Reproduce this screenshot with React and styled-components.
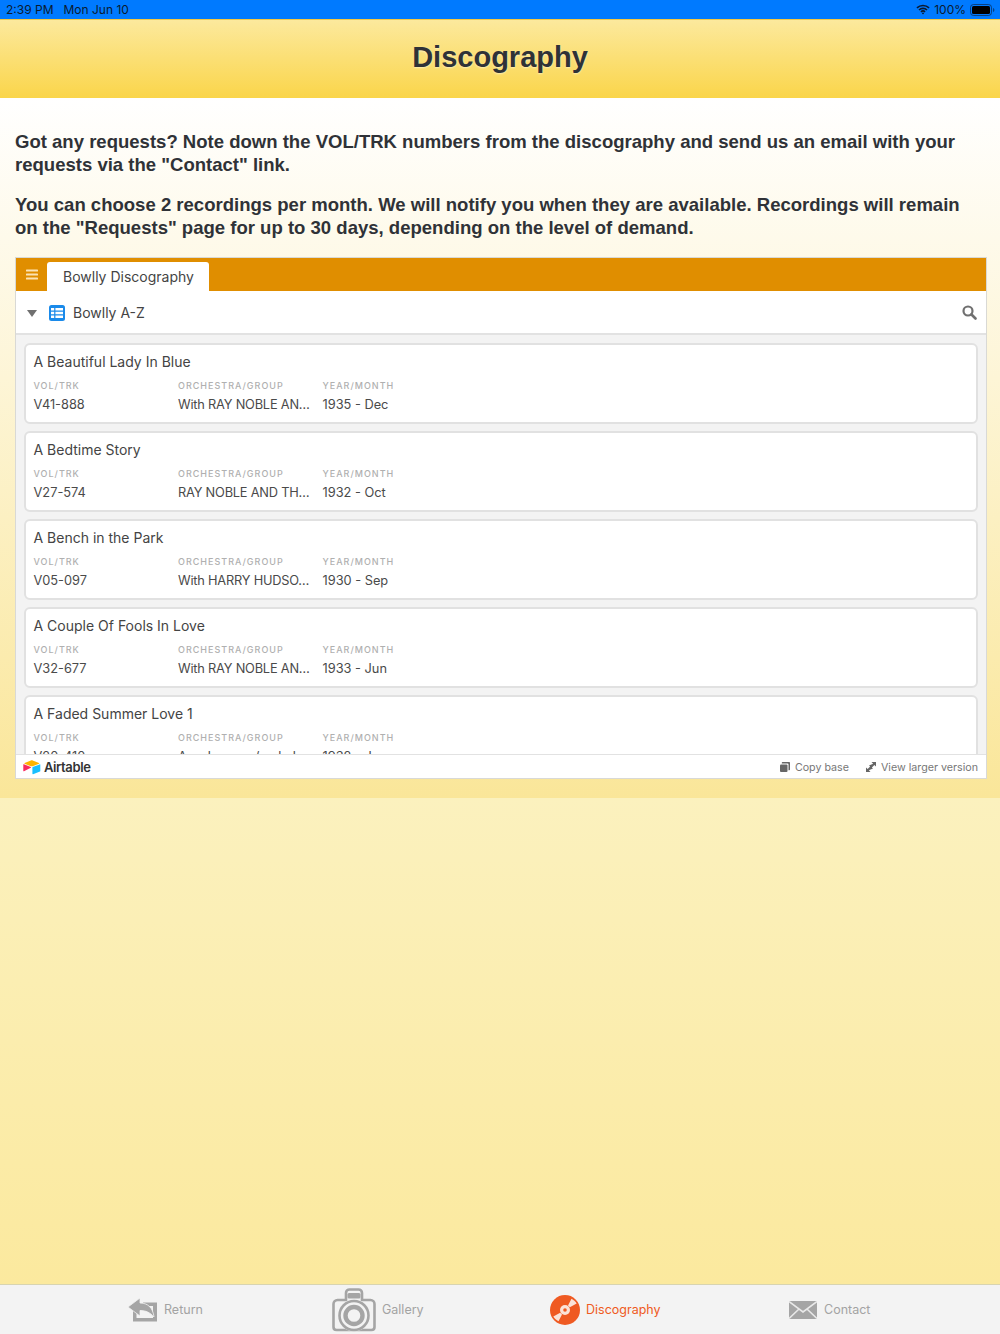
import React from "react";
import styled, { createGlobalStyle } from "styled-components";

const Global = createGlobalStyle`
  html, body { margin: 0; padding: 0; }
  body { background: #fbe99e; font-family: "Liberation Sans", Arial, sans-serif; }
  * { box-sizing: border-box; }
`;

const Page = styled.div`
  width: 1000px;
  height: 1334px;
  display: flex;
  flex-direction: column;
  overflow: hidden;
`;

const StatusBar = styled.div`
  height: 20px;
  flex: none;
  background: #007aff;
  border-bottom: 1px solid #f5c842;
  color: #0b1a30;
  font-size: 12px;
  display: flex;
  align-items: center;
  justify-content: space-between;
  padding: 0 5px 0 6px;
  font-family: Inter, "Liberation Sans", sans-serif;
`;
const StatusGroup = styled.div`
  display: flex;
  align-items: center;
  gap: ${(p) => p.$gap || 10}px;
  height: 19px;
`;
const Header = styled.header`
  height: 78px;
  flex: none;
  background: linear-gradient(#fce99d, #fad54a);
  display: flex;
  align-items: center;
  justify-content: center;
`;
const Title = styled.h1`
  margin: 0 0 4px;
  font-size: 29px;
  font-weight: 700;
  color: #2f3237;
  text-shadow: 0 1px 2px rgba(255, 255, 255, 0.5);
`;
const Main = styled.main`
  height: 700px;
  flex: none;
  background: linear-gradient(#ffffff, #fae699);
  padding: 33px 13px 0 15px;
`;
const Para = styled.p`
  margin: 0 0 17.6px;
  font-size: 18.55px;
  line-height: 22.8px;
  font-weight: 700;
  color: #2f3237;
`;
const Embed = styled.section`
  width: 972px;
  height: 522px;
  border: 1px solid #d9d9d5;
  display: flex;
  flex-direction: column;
  background: #fff;
  font-family: Inter, "Liberation Sans", sans-serif;
`;
const TabBand = styled.div`
  height: 33px;
  flex: none;
  background: #e08e00;
  display: flex;
  align-items: flex-end;
`;
const Burger = styled.div`
  width: 31px;
  height: 33px;
  display: flex;
  align-items: center;
  justify-content: center;
`;
const Tab = styled.div`
  width: 162px;
  height: 29px;
  background: #fff;
  border-radius: 3px 3px 0 0;
  color: #444;
  font-size: 14px;
  display: flex;
  align-items: center;
  padding: 0 0 0 16px;
`;
const ViewBar = styled.div`
  height: 44px;
  flex: none;
  background: #fff;
  border-bottom: 2px solid #e2e2e2;
  display: flex;
  align-items: center;
  padding: 1px 9px 0 11px;
  color: #444;
  font-size: 14px;
`;
const ViewName = styled.span`
  margin-left: 8px;
  flex: 1;
`;
const Caret = styled.div`
  width: 0;
  height: 0;
  border-left: 5px solid transparent;
  border-right: 5px solid transparent;
  border-top: 7px solid #707070;
  margin: 2px 12px 0 0;
`;
const List = styled.div`
  flex: 1;
  min-height: 0;
  overflow: hidden;
  background: #f3f3f3;
  padding: 8px 8px 0;
  display: flex;
  flex-direction: column;
  gap: 7px;
`;
const Card = styled.article`
  flex: none;
  height: 81px;
  background: #fff;
  border: 2px solid #e1e1e1;
  border-radius: 6px;
  padding: 8px 8px 0 7.5px;
  color: #444;
`;
const CardTitle = styled.div`
  font-size: 14px;
  line-height: 18px;
`;
const Fields = styled.div`
  display: grid;
  grid-template-columns: 144.5px 144.5px 1fr;
  margin-top: 9px;
`;
const FieldLabel = styled.div`
  font-size: 9px;
  line-height: 12px;
  letter-spacing: 1px;
  color: #b0b0b0;
  font-weight: 500;
`;
const FieldValue = styled.div`
  font-size: 12.8px;
  line-height: 16px;
  margin-top: 5px;
  color: #4a4a4a;
  white-space: nowrap;
  letter-spacing: ${(p) => (p.$tight ? "-0.2px" : "0")};
`;
const EmbedFoot = styled.div`
  height: 24px;
  flex: none;
  background: #fff;
  border-top: 1px solid #e2e2e2;
  display: flex;
  align-items: center;
  padding: 1px 8px 0 7px;
  font-size: 10.7px;
  color: #777;
`;
const Brand = styled.div`
  display: flex;
  align-items: center;
  flex: 1;
  gap: 3px;
  font-size: 13px;
  font-weight: 600;
  color: #333;
  letter-spacing: -0.4px;
`;
const FootLink = styled.span`
  display: flex;
  align-items: center;
  gap: 5px;
  margin-left: 17px;
`;
const Rest = styled.div`
  flex: 1;
  min-height: 0;
  background: linear-gradient(#fbf1be, #fbe99e);
`;
const TabBar = styled.nav`
  height: 50px;
  flex: none;
  background: #f3f3f3;
  border-top: 1px solid #d8d4b0;
  display: flex;
  align-items: center;
  font-family: Inter, "Liberation Sans", sans-serif;
  font-size: 12.5px;
  color: #a3a3a3;
  padding-left: 128px;
`;
const TabItem = styled.div`
  display: flex;
  align-items: center;
  gap: ${(p) => p.$gap}px;
  width: ${(p) => p.$w}px;
  flex: none;
  color: ${(p) => (p.$active ? "#ef5a22" : "#a3a3a3")};
`;
const TabLabel = styled.span`
  margin-top: -1px;
`;

const records = [
  ["A Beautiful Lady In Blue", "V41-888", "With RAY NOBLE AN…", "1935 - Dec"],
  ["A Bedtime Story", "V27-574", "RAY NOBLE AND TH…", "1932 - Oct"],
  ["A Bench in the Park", "V05-097", "With HARRY HUDSO…", "1930 - Sep"],
  ["A Couple Of Fools In Love", "V32-677", "With RAY NOBLE AN…", "1933 - Jun"],
  ["A Faded Summer Love 1", "V20-410", "Acc. by pno. /orchch…", "1932 - Jan"],
];

const Wifi = () => (
  <svg width="14" height="11" viewBox="0 0 15 11" fill="none" stroke="#0b1a30" strokeWidth="1.7">
    <path d="M1 3.800a9.300 9.300 0 0 1 13 0M3.200 6a6.200 6.200 0 0 1 8.600 0M5.300 8.100a3.200 3.200 0 0 1 4.400 0" />
    <circle cx="7.500" cy="9.600" r="1" fill="#0b1a30" stroke="none" />
  </svg>
);
const Battery = () => (
  <svg width="25" height="12" viewBox="0 0 25 12">
    <rect x="0.500" y="0.500" width="21" height="11" rx="3" fill="none" stroke="#0b1a30" strokeOpacity=".6" />
    <rect x="2" y="2" width="18" height="8" rx="1.500" fill="#000" />
    <path d="M23 4v4c.8-.3 1.400-1 1.400-2s-.6-1.700-1.400-2z" fill="#0b1a30" fillOpacity=".6" />
  </svg>
);
const Menu = () => (
  <svg width="12" height="11" viewBox="0 0 12 11" fill="#fbe3b5">
    <rect y="0.500" width="12" height="2" rx=".6" />
    <rect y="4.500" width="12" height="2" rx=".6" />
    <rect y="8.500" width="12" height="2" rx=".6" />
  </svg>
);
const Grid = () => (
  <svg width="16" height="16" viewBox="0 0 16 16">
    <rect width="16" height="16" rx="2.500" fill="#1a8aea" />
    <path d="M2 3h3.200v2.400H2zM6.400 3H14v2.400H6.400zM2 6.800h3.200v2.400H2zM6.400 6.800H14v2.400H6.400zM2 10.600h3.200V13H2zM6.400 10.600H14V13H6.400z" fill="#fff" />
  </svg>
);
const Search = () => (
  <svg width="15" height="15" viewBox="0 0 15 15" fill="none" stroke="#707070">
    <circle cx="6" cy="6" r="4.500" strokeWidth="2.200" />
    <path d="M9.500 9.500 13.500 13.500" strokeWidth="2.600" strokeLinecap="round" />
  </svg>
);
const AirLogo = () => (
  <svg width="18" height="15" viewBox="0 0 18 15">
    <path d="M7.900.4 1.600 3c-.3.100-.3.600 0 .7l6.300 2.500c.6.200 1.200.2 1.800 0L16 3.700c.4-.1.400-.6 0-.7L9.700.4C9.100.2 8.500.2 7.900.4z" fill="#fcb400" />
    <path d="M9.400 7.500v6.300c0 .3.300.5.600.4l7-2.700c.2-.1.300-.3.300-.4V4.800c0-.3-.3-.5-.6-.4l-7 2.700c-.2.100-.3.200-.3.400z" fill="#18bfff" />
    <path d="M7.800 7.800 1 11.300c-.3.100-.7-.1-.7-.4V4.600c0-.3.300-.5.600-.4l6.900 2.800c.4.200.4.600 0 .8z" fill="#f82b60" />
  </svg>
);
const CopyIcon = () => (
  <svg width="10" height="10" viewBox="0 0 10 10" fill="#666">
    <path d="M2.500 0H9c.6 0 1 .4 1 1v6.500c0 .4-.3.700-.7.700H8.500V2.300c0-.500-.3-.800-.8-.800H1.800V.7c0-.4.300-.7.700-.7z" />
    <rect x="0" y="2.500" width="7.500" height="7.500" rx="1" />
  </svg>
);
const ExpandIcon = () => (
  <svg width="10" height="10" viewBox="0 0 10 10" fill="#666">
    <path d="M5.500 0H10v4.500L8.400 2.900 5.900 5.400 7 6.500 2.900 8.300 4.500 10H0V5.500L1.600 7.100 4.100 4.600 3 3.500 7.100 1.700z" />
  </svg>
);
const ReturnIcon = () => (
  <svg width="30" height="24" viewBox="0 0 30 24">
    <path d="M5 12V23.500H29V4.500H15V8H25V20H8.500V12z" fill="#a5a5a5" />
    <path d="M0 9 12 0V5C20 5 25 10 26 19 22 14.500 18 12.500 12 12.500V18z" fill="#a5a5a5" stroke="#f3f3f3" strokeWidth=".8" />
  </svg>
);
const CameraIcon = () => (
  <svg width="44" height="44" viewBox="0 0 44 44" fill="none" stroke="#a5a5a5">
    <path d="M5.500 12H14V5c0-2 1.500-3.500 3.500-3.500h9c2 0 3.500 1.500 3.500 3.500v7h8.500c2.200 0 4 1.800 4 4v23c0 1.700-1.300 3-3 3H4.500c-1.700 0-3-1.300-3-3V16c0-2.200 1.800-4 4-4z" strokeWidth="2.600" />
    <rect x="15.500" y="5" width="13" height="5.500" rx="1.500" fill="#a5a5a5" stroke="none" />
    <circle cx="22" cy="27.500" r="16" fill="#f3f3f3" stroke="none" />
    <circle cx="22" cy="27.500" r="14.500" strokeWidth="2.600" />
    <circle cx="22" cy="27.500" r="8.500" strokeWidth="4.400" />
  </svg>
);
const DiscIcon = () => (
  <svg width="30" height="30" viewBox="0 0 30 30">
    <circle cx="15" cy="15" r="15" fill="#ef5a22" />
    <path d="M18 10.500 21.500 3.800C23.500 4.800 25.500 6.500 26.700 8.500L19.800 12.300zM12 19.500 8.500 26.200C6.500 25.200 4.500 23.500 3.300 21.500L10.200 17.700z" fill="#fbe3d8" />
    <circle cx="15" cy="15" r="5" fill="#fbe3d8" />
    <circle cx="15" cy="15" r="1.800" fill="#ef5a22" />
  </svg>
);
const MailIcon = () => (
  <svg width="28" height="18" viewBox="0 0 28 18">
    <rect width="28" height="18" fill="#a5a5a5" />
    <path d="M0 .5 14 11 28 .5M0 17.500l10-9.500M28 17.500l-10-9.500" fill="none" stroke="#e9e9e9" strokeWidth="1.600" />
  </svg>
);

export default function App() {
  return (
    <Page>
      <Global />
      <StatusBar>
        <StatusGroup $gap={10}>
          <span>2:39 PM</span>
          <span>Mon Jun 10</span>
        </StatusGroup>
        <StatusGroup $gap={4}>
          <Wifi />
          <span>100%</span>
          <Battery />
        </StatusGroup>
      </StatusBar>
      <Header>
        <Title>Discography</Title>
      </Header>
      <Main>
        <Para>
          Got any requests? Note down the VOL/TRK numbers from the discography and send us an email with your
          requests via the "Contact" link.
        </Para>
        <Para>
          You can choose 2 recordings per month. We will notify you when they are available. Recordings will remain
          on the "Requests" page for up to 30 days, depending on the level of demand.
        </Para>
        <Embed>
          <TabBand>
            <Burger>
              <Menu />
            </Burger>
            <Tab>Bowlly Discography</Tab>
          </TabBand>
          <ViewBar>
            <Caret />
            <Grid />
            <ViewName>Bowlly A-Z</ViewName>
            <Search />
          </ViewBar>
          <List>
            {records.map((r) => (
              <Card key={r[0]}>
                <CardTitle>{r[0]}</CardTitle>
                <Fields>
                  <div>
                    <FieldLabel>VOL/TRK</FieldLabel>
                    <FieldValue>{r[1]}</FieldValue>
                  </div>
                  <div>
                    <FieldLabel>ORCHESTRA/GROUP</FieldLabel>
                    <FieldValue $tight>{r[2]}</FieldValue>
                  </div>
                  <div>
                    <FieldLabel>YEAR/MONTH</FieldLabel>
                    <FieldValue>{r[3]}</FieldValue>
                  </div>
                </Fields>
              </Card>
            ))}
          </List>
          <EmbedFoot>
            <Brand>
              <AirLogo />
              Airtable
            </Brand>
            <FootLink>
              <CopyIcon />
              Copy base
            </FootLink>
            <FootLink>
              <ExpandIcon />
              View larger version
            </FootLink>
          </EmbedFoot>
        </Embed>
      </Main>
      <Rest />
      <TabBar>
        <TabItem $w={204} $gap={6}>
          <ReturnIcon />
          <TabLabel>Return</TabLabel>
        </TabItem>
        <TabItem $w={218} $gap={6}>
          <CameraIcon />
          <TabLabel>Gallery</TabLabel>
        </TabItem>
        <TabItem $w={239} $gap={6} $active>
          <DiscIcon />
          <TabLabel>Discography</TabLabel>
        </TabItem>
        <TabItem $w={120} $gap={7}>
          <MailIcon />
          <TabLabel>Contact</TabLabel>
        </TabItem>
      </TabBar>
    </Page>
  );
}
